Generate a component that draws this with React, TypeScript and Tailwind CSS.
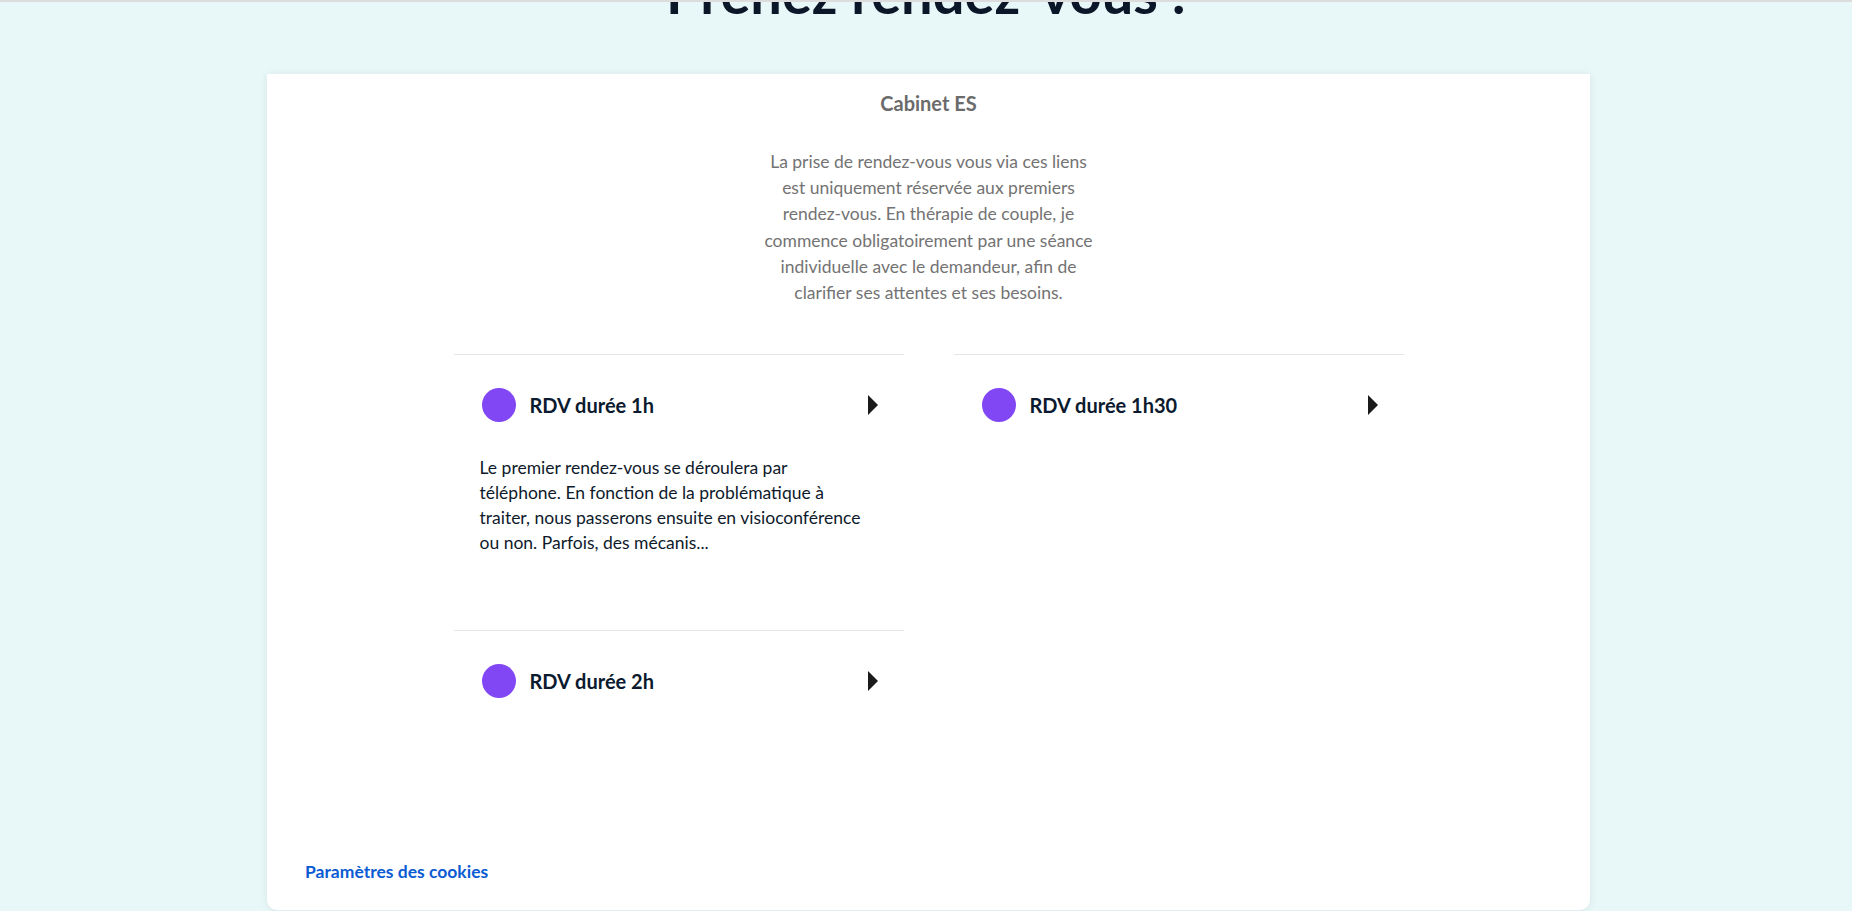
import React from "react";

const font = { fontFamily: "Lato, 'Noto Sans', Arial, sans-serif" };

function Triangle() {
  return (
    <svg width="10" height="20" viewBox="0 0 10 20" className="shrink-0">
      <path d="M0 0 L10 10 L0 20 Z" fill="#1a1a1a" />
    </svg>
  );
}

function Item({ title, desc }: { title: string; desc?: React.ReactNode }) {
  return (
    <div className={`border-t border-[#e6e6e6] ${desc ? "pb-[75px]" : "pb-[33px]"}`}>
      <div className="flex items-center pt-[33px] pl-[28px] pr-[26px]">
        <div className="w-[34px] h-[34px] rounded-full bg-[#8247f5] shrink-0" />
        <div className="ml-[14px] flex-1 text-[20px] font-bold text-[#0b1a2e] leading-[34px]">{title}</div>
        <Triangle />
      </div>
      {desc && (
        <div className="pl-[26px] pr-[20px] mt-[33px] text-[17.5px] leading-[25px] text-[#0e1a2b] whitespace-nowrap">{desc}</div>
      )}
    </div>
  );
}

export default function App() {
  return (
    <div className="h-[911px] overflow-hidden bg-[#e8f7f8] border-t-2 border-[#dcdcdc]" style={font}>
      <h1 className="mt-[-37px] text-center text-[56px] leading-[56px] font-bold text-[#0b1628]">Prenez rendez-vous :</h1>
      <div className="mt-[53px] ml-[267px] w-[1323px] h-[836px] bg-white rounded-b-[10px] shadow-[0_1px_10px_rgba(0,0,0,0.08)] flex flex-col">
        <div className="pt-[16px] text-center text-[20px] leading-[26px] font-bold text-[#6b6b6b]">Cabinet ES</div>
        <p className="mt-[33px] text-center text-[17.5px] leading-[26.2px] text-[#737373]">
          La prise de rendez-vous vous via ces liens
          <br />
          est uniquement réservée aux premiers
          <br />
          rendez-vous. En thérapie de couple, je
          <br />
          commence obligatoirement par une séance
          <br />
          individuelle avec le demandeur, afin de
          <br />
          clarifier ses attentes et ses besoins.
        </p>
        <div className="mt-[48px] w-[950px] mx-auto grid grid-cols-2 gap-x-[50px] items-start">
          <div>
            <Item
              title="RDV durée 1h"
              desc={
                <>
                  Le premier rendez-vous se déroulera par
                  <br />
                  téléphone. En fonction de la problématique à
                  <br />
                  traiter, nous passerons ensuite en visioconférence
                  <br />
                  ou non. Parfois, des mécanis...
                </>
              }
            />
            <Item title="RDV durée 2h" />
          </div>
          <div>
            <Item title="RDV durée 1h30" />
          </div>
        </div>
        <div className="mt-auto pb-[26px] pl-[38px] text-[17.5px] leading-[24px] font-bold text-[#0a5bd3]">
          Paramètres des cookies
        </div>
      </div>
    </div>
  );
}
